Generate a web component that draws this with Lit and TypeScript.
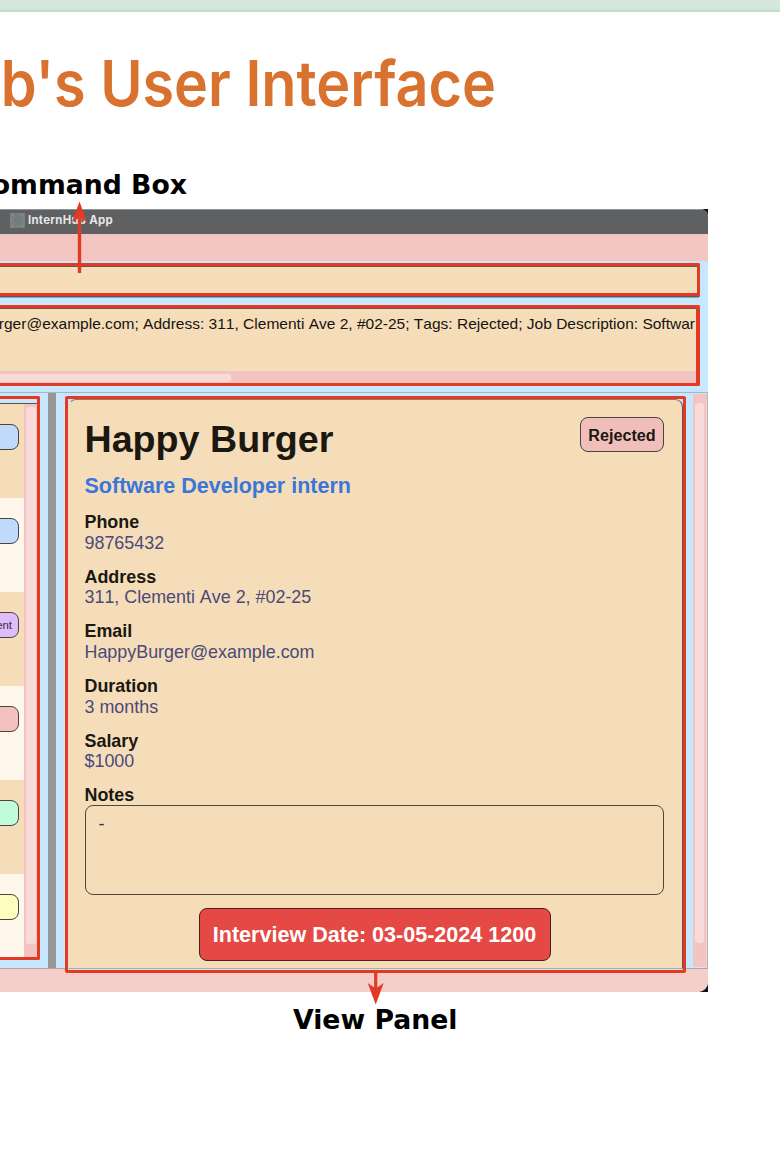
import { LitElement, html, css } from "lit";
import { customElement } from "lit/decorators.js";
import { classMap } from "lit/directives/class-map.js";

const FIELDS = [
  ["Phone", "98765432"],
  ["Address", "311, Clementi Ave 2, #02-25"],
  ["Email", "HappyBurger@example.com"],
  ["Duration", "3 months"],
  ["Salary", "$1000"],
];

const ROWS = [
  { tone: "blue", label: "" },
  { tone: "blue", label: "" },
  { tone: "violet", label: "Assessment" },
  { tone: "pink", label: "" },
  { tone: "mint", label: "" },
  { tone: "yellow", label: "" },
];

@customElement("intern-list")
class InternList extends LitElement {
  static styles = css`
    :host { display: flex; box-sizing: border-box; width: 40px; height: 564px; border: solid #e33a26; border-width: 3px 3px 3px 0; border-radius: 0 2px 2px 0; background: #c6e7fe; padding-top: 4px; }
    .rows { width: 24px; overflow: hidden; border-top: 1px solid #5b544c; }
    .row { box-sizing: border-box; height: 94px; padding-top: 20px; display: flex; justify-content: flex-end; align-items: flex-start; padding-right: 5px; background: #f5ddba; }
    .row:nth-child(even) { background: #fff6ec; }
    .pill { box-sizing: border-box; flex: none; width: 90px; height: 26px; border: 1px solid #4a443e; border-radius: 8px; text-align: right; padding-right: 6px; font: 11.3px/25px "Liberation Sans", Arial, sans-serif; color: #3a2c40; }
    .blue { background: #c0dafb; }
    .violet { background: #dfbdfc; }
    .pink { background: #f2c1bf; }
    .mint { background: #c0fbda; }
    .yellow { background: #fdfdbd; }
    .track { width: 13px; border-top: 1px solid #5b544c; background: #f3c4c1; padding: 3px 0 0 2px; box-sizing: border-box; }
    .thumb { height: 537px; width: 10px; border-radius: 3px; background: #f8dbd8; }
  `;
  render() {
    return html`
      <div class="rows">
        ${ROWS.map((r) => html`<div class="row"><div class=${classMap({ pill: true, [r.tone]: true })}>${r.label}</div></div>`)}
      </div>
      <div class="track"><div class="thumb"></div></div>
    `;
  }
}

@customElement("view-panel")
class ViewPanel extends LitElement {
  static styles = css`
    :host { display: block; box-sizing: border-box; width: 621px; height: 577px; border: 3px solid #e33a26; border-radius: 2px; background: #c6e7fe; font-family: "Liberation Sans", Arial, sans-serif; color: #1b1811; }
    .card { box-sizing: border-box; height: 570px; border: 1px solid #5b544c; border-top-color: #8a7b6a; border-left-color: #f5ddba; border-bottom-color: #b9aa94; border-radius: 8px 8px 0 0; background: #f5ddba; padding: 17px 18px 0 15.5px; width: 615px; }
    .top { display: flex; justify-content: space-between; align-items: flex-start; height: 57px; }
    .name { font-size: 37.65px; line-height: 44px; font-weight: 700; white-space: nowrap; }
    .tag { box-sizing: border-box; width: 84px; height: 35px; border: 1px solid #4f403a; border-radius: 8px; background: #f0bfbb; text-align: center; font-size: 16.15px; line-height: 34px; font-weight: 700; }
    .job { height: 38px; font-size: 21.5px; line-height: 25px; font-weight: 700; color: #3a76d8; }
    .field { height: 54.7px; font-size: 17.9px; line-height: 20.6px; }
    .label { font-size: 17.9px; font-weight: 700; }
    .value { color: #4b4a78; font-kerning: none; }
    .notes-label { font-size: 17.9px; font-weight: 700; line-height: 20.6px; }
    .notes { box-sizing: border-box; height: 90px; margin-top: -1px; border: 1px solid #51463a; border-radius: 8px; padding: 8px 13px; font-size: 18px; line-height: 21px; color: #343262; }
    .date { box-sizing: border-box; width: 352px; height: 53px; margin: 13px 0 0 114px; border: 1px solid #4a1f1c; border-radius: 8px; background: #e54945; color: #fff; text-align: center; font-size: 21.55px; line-height: 51px; font-weight: 700; white-space: nowrap; }
  `;
  render() {
    return html`
      <div class="card">
        <div class="top"><div class="name">Happy Burger</div><div class="tag">Rejected</div></div>
        <div class="job">Software Developer intern</div>
        ${FIELDS.map(([k, v]) => html`<div class="field"><div class="label">${k}</div><div class="value">${v}</div></div>`)}
        <div class="notes-label">Notes</div>
        <div class="notes">-</div>
        <div class="date">Interview Date: 03-05-2024 1200</div>
      </div>
    `;
  }
}

@customElement("app-root")
class AppRoot extends LitElement {
  static styles = css`
    :host { display: block; position: relative; width: 780px; height: 1174px; overflow: hidden; background: #fff; }
    .band { box-sizing: border-box; height: 12px; background: #d5e6dd; border-bottom: 2px solid #c4dacf; }
    .clip { display: flex; justify-content: flex-end; white-space: nowrap; }
    .title { width: 496px; margin-top: 31px; height: 122px; font: 600 63px/80px Inter, sans-serif; color: #d9722e; transform: scaleX(0.913); transform-origin: 100% 0; }
    .caption { font: 700 26.7px/32px "DejaVu Sans", sans-serif; color: #000; }
    .command-caption { width: 187px; height: 44px; padding-top: 4px; box-sizing: border-box; }
    .view-caption { padding: 12px 0 0 293px; }
    .backing { width: 708px; height: 783px; background: #0c1020; }
    .window { width: 708px; height: 783px; overflow: hidden; border-radius: 0 8px 10px 0; background: #c6e7fe; }
    .titlebar { height: 25px; box-sizing: border-box; border-top: 1px solid #929394; background: #5f6062; display: flex; align-items: center; gap: 3px; padding: 0 0 4px 10px; color: #e6e6e6; font: 700 11.4px/14px Inter, sans-serif; letter-spacing: 0.28px; }
    .menu { height: 27px; background: #f3c6c2; }
    .command { box-sizing: border-box; width: 700px; height: 33px; margin-top: 2px; border: solid #e33a26; border-width: 3px 3px 3px 0; border-radius: 0 2px 2px 0; background: #f5ddba; box-shadow: inset 0 1px #6d5648, 0 1.5px #555b62; }
    .result { box-sizing: border-box; width: 700px; height: 81px; margin-top: 9px; border: solid #e33a26; border-width: 3px 4px 3px 0; border-radius: 0 2px 2px 0; background: #f5ddba; box-shadow: inset 0 1px #6d5648; }
    .message { height: 63px; box-sizing: border-box; padding: 7px 1px 0 0; overflow: hidden; font: 15.52px/18px "Liberation Sans", Arial, sans-serif; color: #17130f; font-kerning: none; }
    .hbar { height: 12px; box-sizing: border-box; padding-top: 3px; background: #f3c4c1; }
    .hthumb { width: 231px; height: 8px; border-radius: 0 3px 3px 0; background: #f8dbd8; }
    .split { box-sizing: border-box; display: flex; height: 577px; margin-top: 6px; border-top: 1px solid #a6b5bf; border-bottom: 1px solid #b7a5a5; }
    .left { padding-top: 3px; }
    .divider { box-sizing: border-box; width: 8px; margin: 0 9px 0 8px; background: #979797; }
    .right { padding-top: 3px; height: 573px; }
    .vbar { box-sizing: border-box; width: 13px; margin: 1px 0 1px 7px; padding: 9px 0 0 2px; background: #f3c4c1; }
    .vthumb { width: 9px; height: 540px; border-radius: 3px; background: #f8dbd8; }
    .edge { width: 2px; border-right: 1px solid #b8b5b5; box-sizing: border-box; background: #eecfcd; }
    .status { height: 23px; background: #f5cdc9; }
    .arrow { position: absolute; }
    .up { left: 70px; top: 200px; }
    .down { left: 365px; top: 971px; }
  `;
  render() {
    return html`
      <div class="band"></div>
      <div class="clip title">b's User Interface</div>
      <div class="clip caption command-caption">Command Box</div>
      <div class="backing">
        <div class="window">
          <div class="titlebar">
            <svg width="15" height="15" viewBox="0 0 15 15">
              <rect width="15" height="15" fill="#778080" />
              <path d="M1 1l3 2M14 1l-3 2M1 14l3-2M14 14l-3-2M0 7h2M13 7h2" stroke="#a58c80" fill="none" />
              <path d="M3 7l2-2 1 4 2-3 1 3 3-3M4 11h7M5 3h5" stroke="#65777a" stroke-width="0.8" fill="none" />
            </svg>
            <span>InternHub App</span>
          </div>
          <div class="menu"></div>
          <div class="command"></div>
          <div class="result">
            <div class="clip message">Burger@example.com; Address: 311, Clementi Ave 2, #02-25; Tags: Rejected; Job Description: Softwar</div>
            <div class="hbar"><div class="hthumb"></div></div>
          </div>
          <div class="split">
            <div class="left"><intern-list></intern-list></div>
            <div class="divider"></div>
            <div class="right"><view-panel></view-panel></div>
            <div class="vbar"><div class="vthumb"></div></div>
            <div class="edge"></div>
          </div>
          <div class="status"></div>
        </div>
      </div>
      <div class="caption view-caption">View Panel</div>
      <svg class="arrow up" width="20" height="76" viewBox="0 0 20 76">
        <path d="M9.5 73V18" stroke="#e33a26" stroke-width="3.4" />
        <path d="M9.5 1.5L17 22L9.5 17.5L2 22Z" fill="#e33a26" />
      </svg>
      <svg class="arrow down" width="22" height="36" viewBox="0 0 22 36">
        <path d="M10.7 0V18" stroke="#e33a26" stroke-width="3.2" />
        <path d="M10.7 33.5L18.7 12L10.7 17.5L2.7 12Z" fill="#e33a26" />
      </svg>
    `;
  }
}
